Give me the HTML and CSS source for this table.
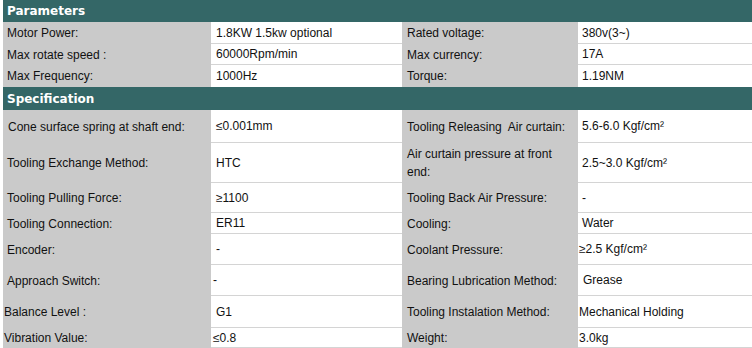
FILE: index.html
```html
<!DOCTYPE html>
<html lang="en">
<head>
<meta charset="utf-8">
<title>Parameters and Specification</title>
<link rel="stylesheet" href="styles.css">
</head>
<body>
<div class="sheet">
  <div class="band">Parameters</div>
  <div class="row h22">
    <div class="lab">Motor Power:</div>
    <div class="val">1.8KW 1.5kw optional</div>
    <div class="lab lab2">Rated voltage:</div>
    <div class="val val2">380v(3~)</div>
  </div>
  <div class="row h21">
    <div class="lab">Max rotate speed :</div>
    <div class="val">60000Rpm/min</div>
    <div class="lab lab2">Max currency:</div>
    <div class="val val2">17A</div>
  </div>
  <div class="row h22 last">
    <div class="lab">Max Frequency:</div>
    <div class="val">1000Hz</div>
    <div class="lab lab2">Torque:</div>
    <div class="val val2">1.19NM</div>
  </div>

  <div class="band band-spec">Specification</div>
  <div class="row h33">
    <div class="lab pl5">Cone surface spring at shaft end:</div>
    <div class="val">≤0.001mm</div>
    <div class="lab lab2"><span class="pre">Tooling Releasing  Air curtain:</span></div>
    <div class="val val2">5.6-6.0 Kgf/cm²</div>
  </div>
  <div class="row h40">
    <div class="lab">Tooling Exchange Method:</div>
    <div class="val">HTC</div>
    <div class="lab lab2 two">Air curtain pressure at front end:</div>
    <div class="val val2">2.5~3.0 Kgf/cm²</div>
  </div>
  <div class="row h30">
    <div class="lab">Tooling Pulling Force:</div>
    <div class="val">≥1100</div>
    <div class="lab lab2">Tooling Back Air Pressure:</div>
    <div class="val val2">-</div>
  </div>
  <div class="row h21">
    <div class="lab">Tooling Connection:</div>
    <div class="val">ER11</div>
    <div class="lab lab2">Cooling:</div>
    <div class="val val2">Water</div>
  </div>
  <div class="row h31">
    <div class="lab">Encoder:</div>
    <div class="val">-</div>
    <div class="lab lab2">Coolant Pressure:</div>
    <div class="val val2 pl1">≥2.5 Kgf/cm²</div>
  </div>
  <div class="row h31">
    <div class="lab">Approach Switch:</div>
    <div class="val pl2">-</div>
    <div class="lab lab2">Bearing Lubrication Method:</div>
    <div class="val val2 pl5">Grease</div>
  </div>
  <div class="row h32">
    <div class="lab pl1">Balance Level :</div>
    <div class="val">G1</div>
    <div class="lab lab2">Tooling Instalation Method:</div>
    <div class="val val2 pl1">Mechanical Holding</div>
  </div>
  <div class="row h20">
    <div class="lab pl1">Vibration Value:</div>
    <div class="val pl2">≤0.8</div>
    <div class="lab lab2">Weight:</div>
    <div class="val val2 pl1">3.0kg</div>
  </div>
</div>
</body>
</html>
```

FILE: styles.css
```css
* {
  box-sizing: border-box;
}

html, body {
  margin: 0;
  padding: 0;
  background: #ffffff;
}

body {
  padding-left: 3px;
  font-family: "Liberation Sans", Arial, sans-serif;
  font-size: 12px;
  color: #111111;
}

.sheet {
  width: 749px;
  display: flex;
  flex-direction: column;
}

.band {
  height: 22px;
  background: #346767;
  color: #ffffff;
  font-family: "DejaVu Sans", Verdana, sans-serif;
  font-weight: bold;
  font-size: 12px;
  display: flex;
  align-items: center;
  padding-left: 4px;
}

.band-spec {
  height: 23px;
}

.row {
  display: grid;
  grid-template-columns: 208px 191px 176px 174px;
}

.h20 { height: 20px; }
.h21 { height: 21px; }
.h22 { height: 22px; }
.h30 { height: 30px; }
.h31 { height: 31px; }
.h32 { height: 32px; }
.h33 { height: 33px; }
.h40 { height: 40px; }

.lab,
.val {
  display: flex;
  align-items: center;
  line-height: 14px;
  white-space: nowrap;
}

.lab {
  background: #cacaca;
  padding-left: 4px;
}

.lab2 {
  padding-left: 5px;
}

.val {
  background: #ffffff;
  padding-left: 5px;
  border-bottom: 1px solid #d4d4d4;
}

.val2 {
  padding-left: 4px;
}

.last .val {
  border-bottom: none;
}

.two {
  white-space: normal;
  line-height: 18px;
  padding-right: 8px;
}

.pre {
  white-space: pre;
}

.pl1 { padding-left: 1px; }
.pl2 { padding-left: 2px; }
.pl5 { padding-left: 5px; }
```
